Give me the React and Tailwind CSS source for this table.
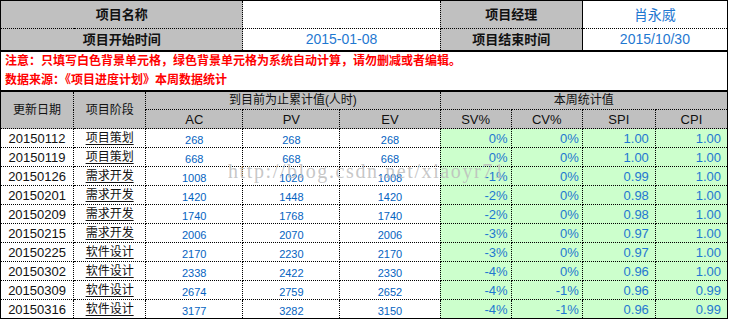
import React from 'react';

const rows = [
  ['20150112', '项目策划', 268, 268, 268, '0%', '0%', '1.00', '1.00'],
  ['20150119', '项目策划', 668, 668, 668, '0%', '0%', '1.00', '1.00'],
  ['20150126', '需求开发', 1008, 1020, 1008, '-1%', '0%', '0.99', '1.00'],
  ['20150201', '需求开发', 1420, 1448, 1420, '-2%', '0%', '0.98', '1.00'],
  ['20150209', '需求开发', 1740, 1768, 1740, '-2%', '0%', '0.98', '1.00'],
  ['20150215', '需求开发', 2006, 2070, 2006, '-3%', '0%', '0.97', '1.00'],
  ['20150225', '软件设计', 2170, 2230, 2170, '-3%', '0%', '0.97', '1.00'],
  ['20150302', '软件设计', 2338, 2422, 2330, '-4%', '0%', '0.96', '1.00'],
  ['20150309', '软件设计', 2674, 2759, 2652, '-4%', '-1%', '0.96', '0.99'],
  ['20150316', '软件设计', 3177, 3282, 3150, '-4%', '-1%', '0.96', '0.99'],
];

const widths = [73, 72, 97, 97, 100, 71, 71, 73, 72];

// dotted grid everywhere, solid lines win in the collapsed model
const cell = 'border border-dotted border-black p-0';
const gray = 'bg-[#c0c0c0]';
const green = 'bg-[#ccffcc] text-right text-[13px] text-[#1f78d1]';
const acc = 'text-center align-bottom pb-[1px] text-[11px] text-[#0563c1]';

const App = () => {
  return (
    <div className="relative w-[729px] h-[319px] overflow-hidden bg-white font-['Liberation_Sans','Noto_Sans_CJK_SC',sans-serif] text-[#111]">
      <table className="table-fixed border-collapse w-[728px] [border:1px_solid_black] leading-none">
        <colgroup>
          {widths.map((w, i) => (
            <col key={i} style={{ width: w }} />
          ))}
        </colgroup>
        <tbody>
          <tr className="h-[28px]">
            <td colSpan={3} className={`${cell} ${gray} text-center font-bold text-[13px]`}>项目名称</td>
            <td colSpan={2} className={cell}></td>
            <td colSpan={2} className={`${cell} ${gray} text-center font-bold text-[13px]`}>项目经理</td>
            <td colSpan={2} className={`${cell} [border-left-style:solid] text-center text-[14px] text-[#1f78d1]`}>
              肖永威
            </td>
          </tr>
          <tr className="h-[22px]">
            <td colSpan={3} className={`${cell} ${gray} text-center font-bold text-[13px]`}>项目开始时间</td>
            <td colSpan={2} className={`${cell} text-center text-[14px] text-[#1f78d1]`}>2015-01-08</td>
            <td colSpan={2} className={`${cell} ${gray} text-center font-bold text-[13px]`}>项目结束时间</td>
            <td colSpan={2} className={`${cell} [border-left-style:solid] text-center text-[14px] text-[#1f78d1]`}>
              2015/10/30
            </td>
          </tr>
          <tr className="h-[38px]">
            <td colSpan={9} className="p-0 pl-[4px] [border-top:2px_solid_black] [border-bottom:2px_solid_black] text-[12px] font-bold text-[#ff0000]">
              <div className="h-[19px] flex items-center">注意：只填写白色背景单元格，绿色背景单元格为系统自动计算，请勿删减或者编辑。</div>
              <div className="h-[19px] flex items-center">数据来源：《项目进度计划》本周数据统计</div>
            </td>
          </tr>
          <tr className={`h-[19px] ${gray} text-[12px]`}>
            <td rowSpan={2} className={`${cell} text-center`}>更新日期</td>
            <td rowSpan={2} className={`${cell} text-center`}>项目阶段</td>
            <td colSpan={3} className={`${cell} text-center`}>到目前为止累计值(人时)</td>
            <td colSpan={4} className={`${cell} text-center`}>本周统计值</td>
          </tr>
          <tr className={`h-[19px] ${gray} text-[13px]`}>
            <td className={`${cell} text-center`}>AC</td>
            <td className={`${cell} text-center`}>PV</td>
            <td className={`${cell} text-center`}>EV</td>
            <td className={`${cell} text-center`}>SV%</td>
            <td className={`${cell} text-center`}>CV%</td>
            <td className={`${cell} text-center`}>SPI</td>
            <td className={`${cell} text-center`}>CPI</td>
          </tr>
          {rows.map((r, i) => (
            <tr key={i} className="h-[19px]">
              <td className={`${cell} text-center text-[13px]`}>{r[0]}</td>
              <td className={`${cell} text-center text-[12px]`}>
                <span className="underline underline-offset-[2px]">{r[1]}</span>
              </td>
              <td className={`${cell} ${acc}`}>{r[2]}</td>
              <td className={`${cell} ${acc}`}>{r[3]}</td>
              <td className={`${cell} ${acc}`}>{r[4]}</td>
              <td className={`${cell} ${green} pr-[3px]`}>{r[5]}</td>
              <td className={`${cell} ${green} pr-[3px]`}>{r[6]}</td>
              <td className={`${cell} ${green} pr-[6px]`}>{r[7]}</td>
              <td className={`${cell} ${green} pr-[6px]`}>{r[8]}</td>
            </tr>
          ))}
        </tbody>
      </table>
      {/* blog watermark laid over the grid */}
      <div className="pointer-events-none absolute left-[228px] top-[161px] font-['Liberation_Serif',serif] text-[20px] leading-none tracking-[1.6px] text-[#bdbdbd]/85">
        http://blog.csdn.net/xiaoyr71
      </div>
    </div>
  );
};

export default App;
